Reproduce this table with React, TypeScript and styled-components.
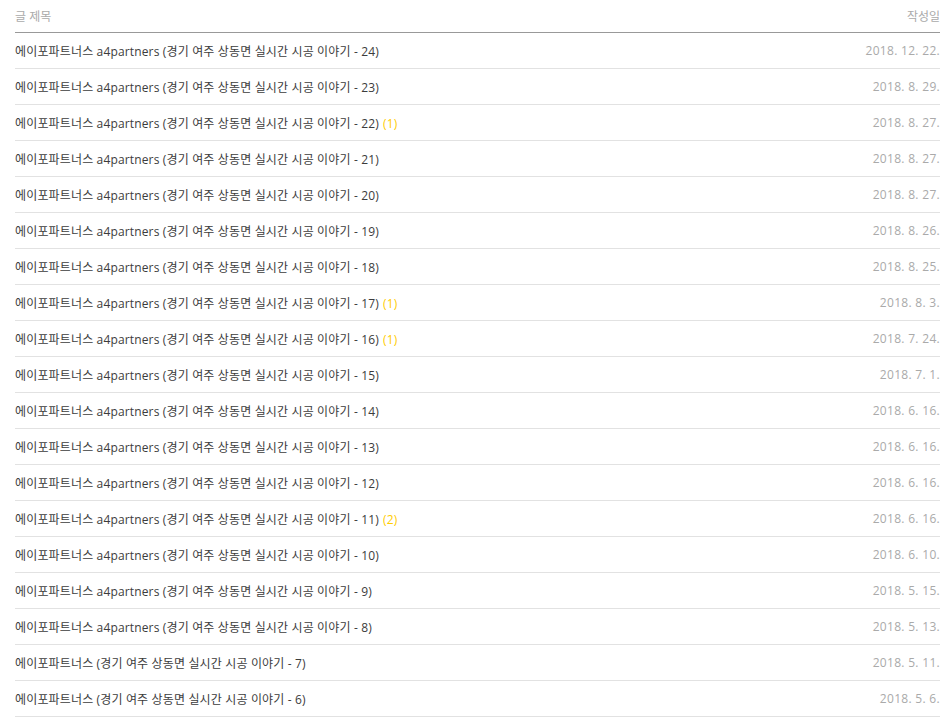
import React from "react";
import styled, { createGlobalStyle } from "styled-components";

const Global = createGlobalStyle`
  html, body { margin: 0; padding: 0; background: #fff; }
  body { font-family: "Open Sans", "Noto Sans CJK KR", sans-serif; }
`;

const Wrap = styled.div`
  padding: 0 12px 0 15px;
  width: 925px;
`;

const Table = styled.div`
  display: flex;
  flex-direction: column;
`;

const HeadRow = styled.div`
  display: flex;
  justify-content: space-between;
  align-items: center;
  height: 32px;
  border-bottom: 1px solid #999;
  font-size: 12px;
  color: #aaa;
`;

const Row = styled.div`
  display: flex;
  justify-content: space-between;
  align-items: center;
  height: 35px;
  border-bottom: 1px solid #e2e2e2;
  font-size: 12px;
`;

const Title = styled.span`
  color: #3c3c3c;
  white-space: nowrap;
  letter-spacing: 0.15px;
`;

const Count = styled.span`
  color: #fc0;
  margin-left: 4px;
`;

const DateText = styled.span`
  color: #aaa;
  white-space: nowrap;
  letter-spacing: 0.3px;
`;

type Item = { t: string; c?: number; d: string };

const items: Item[] = [
  { t: "에이포파트너스 a4partners (경기 여주 상동면 실시간 시공 이야기 - 24)", d: "2018. 12. 22." },
  { t: "에이포파트너스 a4partners (경기 여주 상동면 실시간 시공 이야기 - 23)", d: "2018. 8. 29." },
  { t: "에이포파트너스 a4partners (경기 여주 상동면 실시간 시공 이야기 - 22)", c: 1, d: "2018. 8. 27." },
  { t: "에이포파트너스 a4partners (경기 여주 상동면 실시간 시공 이야기 - 21)", d: "2018. 8. 27." },
  { t: "에이포파트너스 a4partners (경기 여주 상동면 실시간 시공 이야기 - 20)", d: "2018. 8. 27." },
  { t: "에이포파트너스 a4partners (경기 여주 상동면 실시간 시공 이야기 - 19)", d: "2018. 8. 26." },
  { t: "에이포파트너스 a4partners (경기 여주 상동면 실시간 시공 이야기 - 18)", d: "2018. 8. 25." },
  { t: "에이포파트너스 a4partners (경기 여주 상동면 실시간 시공 이야기 - 17)", c: 1, d: "2018. 8. 3." },
  { t: "에이포파트너스 a4partners (경기 여주 상동면 실시간 시공 이야기 - 16)", c: 1, d: "2018. 7. 24." },
  { t: "에이포파트너스 a4partners (경기 여주 상동면 실시간 시공 이야기 - 15)", d: "2018. 7. 1." },
  { t: "에이포파트너스 a4partners (경기 여주 상동면 실시간 시공 이야기 - 14)", d: "2018. 6. 16." },
  { t: "에이포파트너스 a4partners (경기 여주 상동면 실시간 시공 이야기 - 13)", d: "2018. 6. 16." },
  { t: "에이포파트너스 a4partners (경기 여주 상동면 실시간 시공 이야기 - 12)", d: "2018. 6. 16." },
  { t: "에이포파트너스 a4partners (경기 여주 상동면 실시간 시공 이야기 - 11)", c: 2, d: "2018. 6. 16." },
  { t: "에이포파트너스 a4partners (경기 여주 상동면 실시간 시공 이야기 - 10)", d: "2018. 6. 10." },
  { t: "에이포파트너스 a4partners (경기 여주 상동면 실시간 시공 이야기 - 9)", d: "2018. 5. 15." },
  { t: "에이포파트너스 a4partners (경기 여주 상동면 실시간 시공 이야기 - 8)", d: "2018. 5. 13." },
  { t: "에이포파트너스 (경기 여주 상동면 실시간 시공 이야기 - 7)", d: "2018. 5. 11." },
  { t: "에이포파트너스 (경기 여주 상동면 실시간 시공 이야기 - 6)", d: "2018. 5. 6." },
];

export default function App() {
  return (
    <>
      <Global />
      <Wrap>
        <Table>
          <HeadRow>
            <span>글 제목</span>
            <span>작성일</span>
          </HeadRow>
          {items.map((it, i) => (
            <Row key={i}>
              <Title>
                {it.t}
                {it.c ? <Count>({it.c})</Count> : null}
              </Title>
              <DateText>{it.d}</DateText>
            </Row>
          ))}
        </Table>
      </Wrap>
    </>
  );
}
